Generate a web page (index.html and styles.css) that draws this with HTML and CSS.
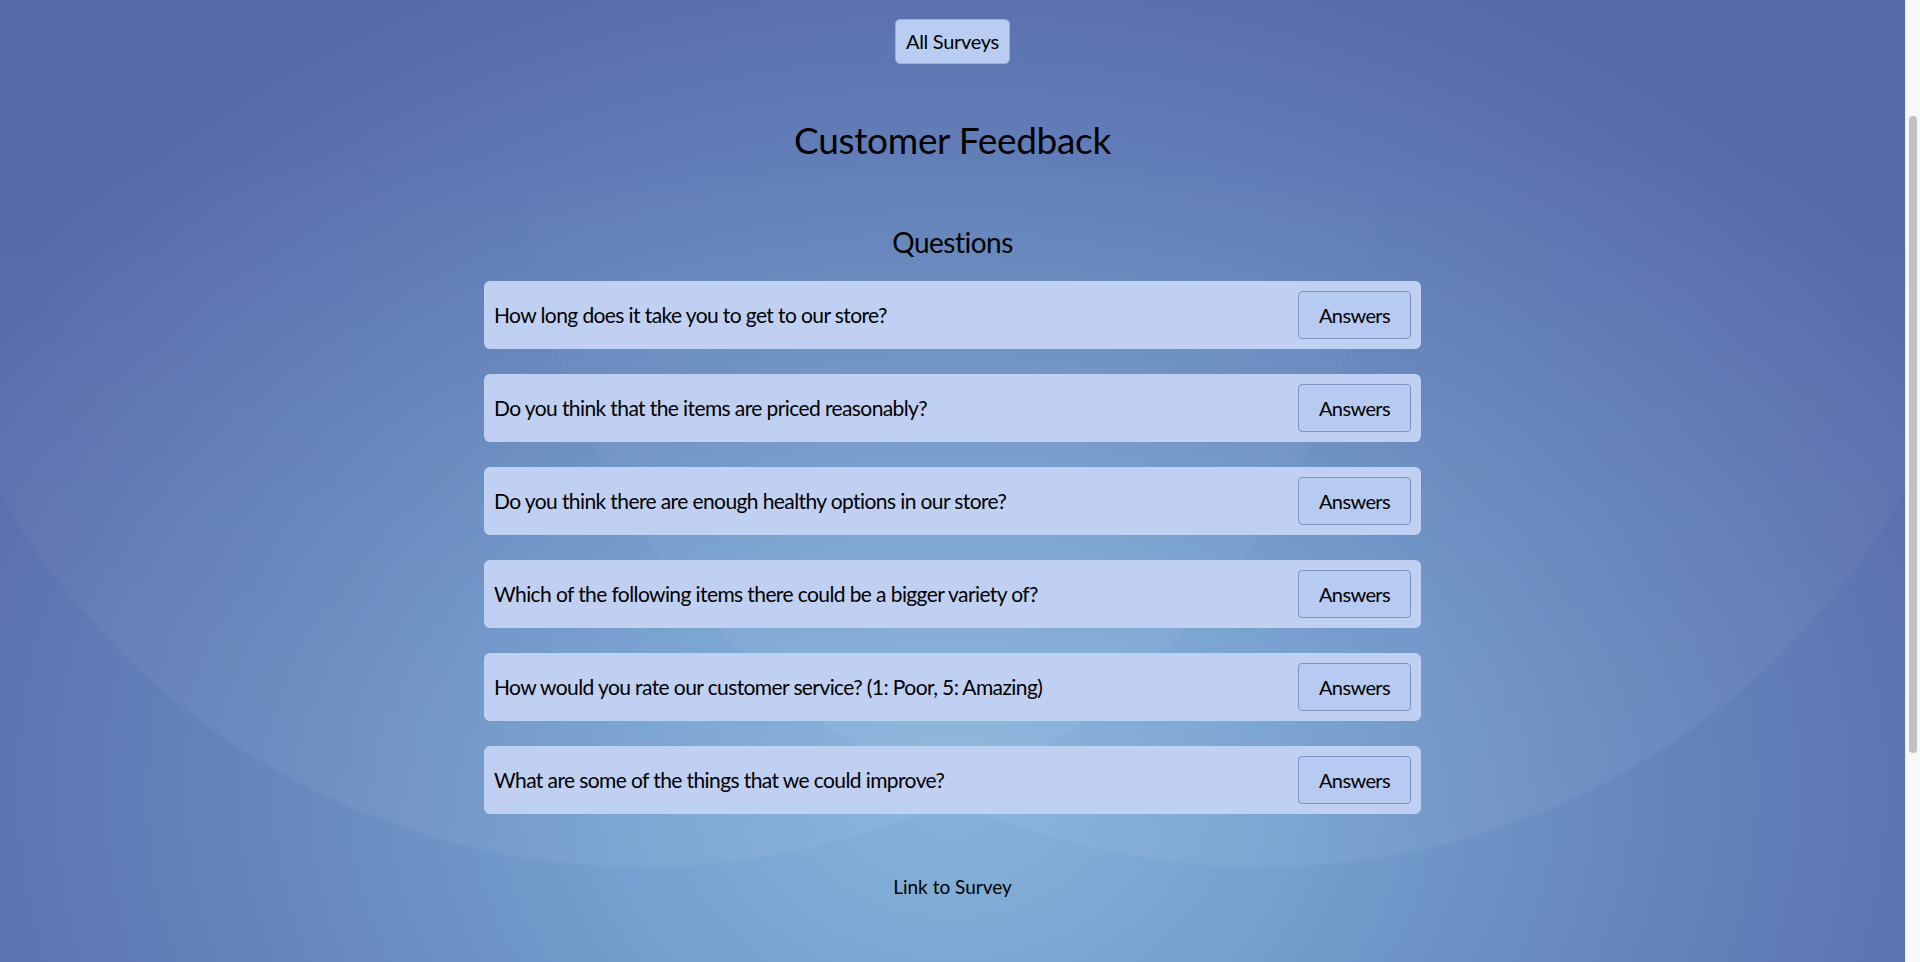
FILE: index.html
```html
<!DOCTYPE html>
<html lang="en">
<head>
<meta charset="utf-8">
<title>Customer Feedback</title>
<link rel="stylesheet" href="styles.css">
</head>
<body>
<main class="page">
  <nav class="topnav">
    <button class="nav-btn" type="button">All Surveys</button>
  </nav>
  <h1 class="survey-title">Customer Feedback</h1>
  <h2 class="section-title">Questions</h2>
  <ul class="question-list">
    <li class="question"><span class="question-text">How long does it take you to get to our store?</span><button class="answers-btn" type="button">Answers</button></li>
    <li class="question"><span class="question-text">Do you think that the items are priced reasonably?</span><button class="answers-btn" type="button">Answers</button></li>
    <li class="question"><span class="question-text">Do you think there are enough healthy options in our store?</span><button class="answers-btn" type="button">Answers</button></li>
    <li class="question"><span class="question-text">Which of the following items there could be a bigger variety of?</span><button class="answers-btn" type="button">Answers</button></li>
    <li class="question"><span class="question-text">How would you rate our customer service? (1: Poor, 5: Amazing)</span><button class="answers-btn" type="button">Answers</button></li>
    <li class="question"><span class="question-text">What are some of the things that we could improve?</span><button class="answers-btn" type="button">Answers</button></li>
  </ul>
  <a class="survey-link" href="#">Link to Survey</a>
</main>
<div class="scrollbar" aria-hidden="true"><div class="scrollbar-thumb"></div></div>
</body>
</html>
```
FILE: styles.css
```css
html {
  min-height: 100%;
  background-color: #5d74b0;
  background-image: radial-gradient(ellipse 1150px 900px at 952px 790px, #87b4da 0%, #75a0cf 30%, #6686bd 60%, #5668a8 100%);
  background-repeat: no-repeat;
  background-size: 100% 962px;
}

body {
  margin: 0;
  display: flex;
  font-family: "Lato", "Noto Sans", sans-serif;
  color: #000;
  position: relative;
  overflow: hidden;
}

body::before,
body::after {
  content: "";
  position: absolute;
  z-index: -1;
  top: -613px;
  width: 1480px;
  height: 1480px;
  border-radius: 50%;
  background: linear-gradient(to bottom, rgba(255,255,255,0) 50%, rgba(255,255,255,0.025) 70%, rgba(255,255,255,0.055) 100%);
}

body::before {
  left: calc(642px - 740px);
}

body::after {
  left: calc(1262px - 740px);
}

.page {
  flex: 1;
  display: flex;
  flex-direction: column;
  align-items: center;
  padding: 19px 0 160px;
}

.topnav {
  display: flex;
  justify-content: center;
}

.nav-btn {
  font-family: inherit;
  font-size: 20px;
  line-height: 25px;
  letter-spacing: -0.3px;
  padding: 9px 10px;
  border: 1px solid #9aadd6;
  border-radius: 5px;
  background: #b9cdf2;
  color: #000;
}

.survey-title {
  margin: 53px 0 0;
  font-size: 37px;
  line-height: 46px;
  letter-spacing: -0.3px;
  font-weight: 400;
}

.section-title {
  margin: 61px 0 0;
  font-size: 28px;
  line-height: 36px;
  letter-spacing: -0.5px;
  font-weight: 400;
}

.question-list {
  list-style: none;
  margin: 21px 0 0;
  padding: 0;
  width: 937px;
  display: flex;
  flex-direction: column;
  gap: 25px;
}

.question {
  display: flex;
  align-items: center;
  justify-content: space-between;
  padding: 10px 10px 10px 10px;
  background: #c0d0f2;
  border-radius: 6px;
}

.question-text {
  font-size: 21px;
  line-height: 26px;
  letter-spacing: -0.6px;
}

.answers-btn {
  font-family: inherit;
  font-size: 20px;
  line-height: 26px;
  letter-spacing: -0.6px;
  padding: 10px 0;
  width: 113px;
  border: 1px solid #7f94c3;
  border-radius: 4px;
  background: #b7cbf2;
  color: #000;
}

.survey-link {
  margin-top: 61px;
  font-size: 19px;
  line-height: 24px;
  color: #000;
  text-decoration: none;
}

.scrollbar {
  flex: 0 0 15px;
  width: 15px;
  min-height: 962px;
  box-sizing: border-box;
  background: #f8f8f8;
  border-left: 1px solid #ececec;
  padding: 116px 3px 0 3px;
}

.scrollbar-thumb {
  width: 8px;
  height: 637px;
  border-radius: 4px;
  background: #c1c1c1;
}
```
